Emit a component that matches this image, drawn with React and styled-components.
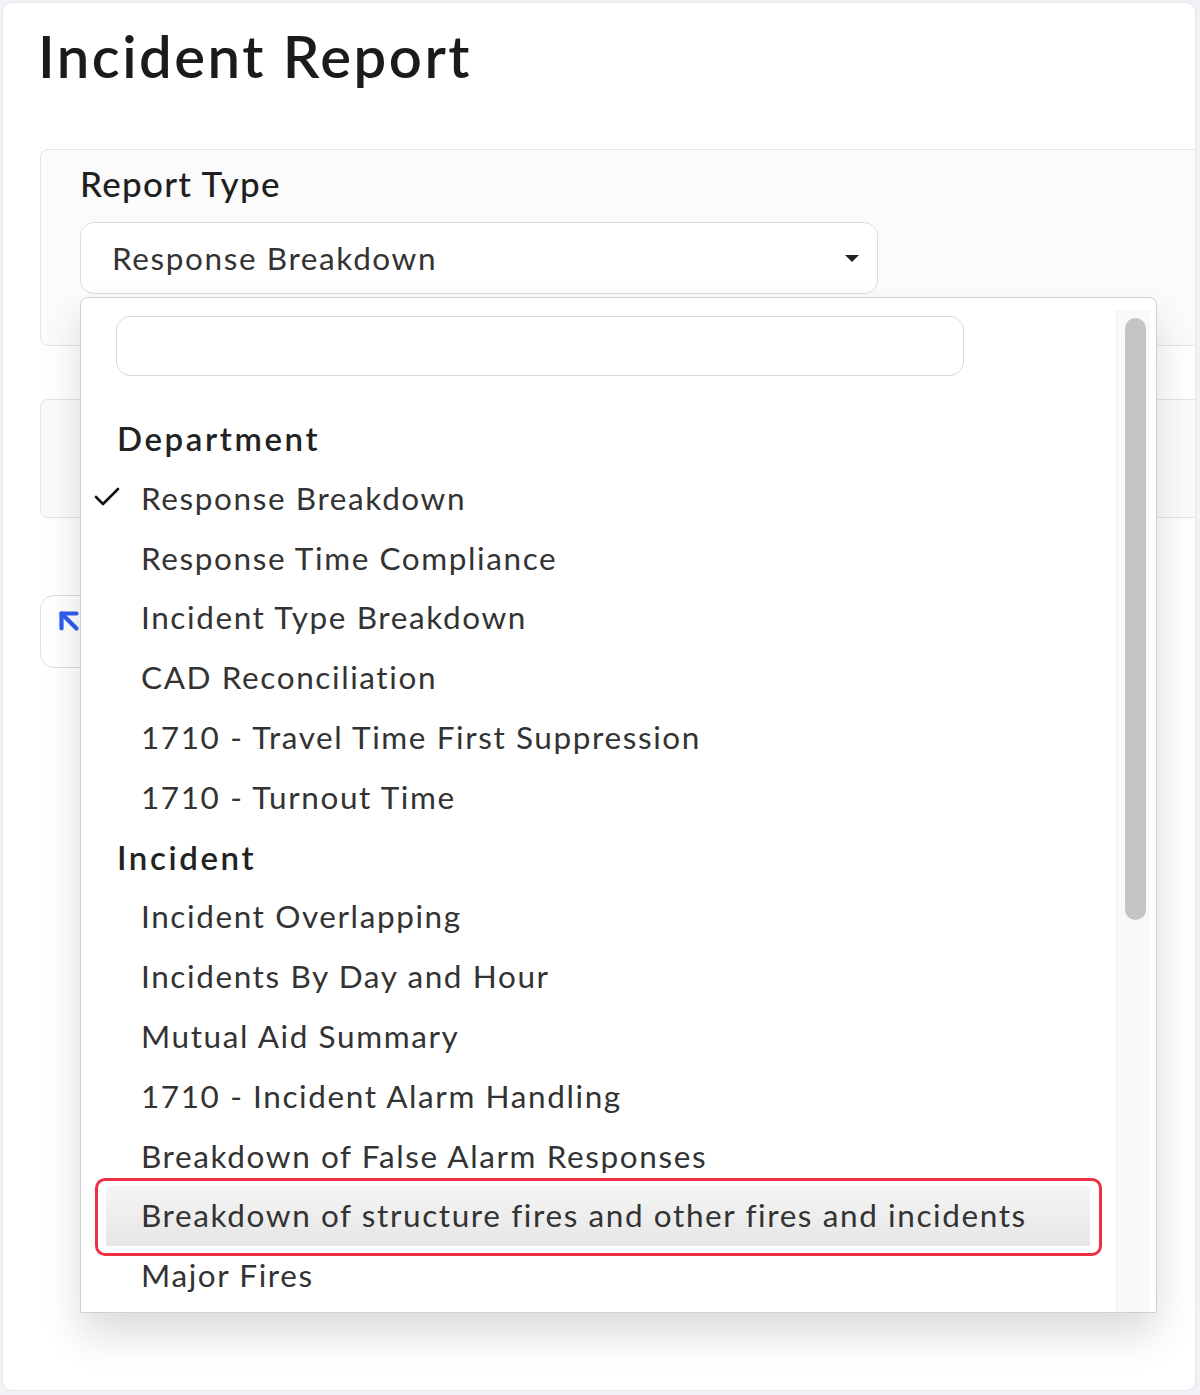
import React from 'react'
import styled, { createGlobalStyle } from 'styled-components'
import { ArrowUpLeft } from 'lucide-react'

const GlobalStyle = createGlobalStyle`
  html, body {
    margin: 0;
    padding: 0;
    background: #f1f1f6;
    font-family: Lato, "Open Sans", "Liberation Sans", sans-serif;
    color: #222;
  }
`

const groups = [
  {
    title: 'Department',
    items: [
      'Response Breakdown',
      'Response Time Compliance',
      'Incident Type Breakdown',
      'CAD Reconciliation',
      '1710 - Travel Time First Suppression',
      '1710 - Turnout Time',
    ],
  },
  {
    title: 'Incident',
    items: [
      'Incident Overlapping',
      'Incidents By Day and Hour',
      'Mutual Aid Summary',
      '1710 - Incident Alarm Handling',
      'Breakdown of False Alarm Responses',
      'Breakdown of structure fires and other fires and incidents',
      'Major Fires',
    ],
  },
]

const selected = 'Response Breakdown'
const hovered = 'Breakdown of structure fires and other fires and incidents'

const IncidentReport = () => {
  return (
    <>
      <GlobalStyle />
      <Frame>
        <Title>Incident Report</Title>
        <Cards>
          <Card $height={197}>
            <Label>Report Type</Label>
            <SelectWrap>
              <SelectBox>
                <span>{selected}</span>
                <Caret />
              </SelectBox>
              <Dropdown>
                <List>
                  <Search />
                  {groups.map((g) => (
                    <div key={g.title}>
                      <GroupTitle>{g.title}</GroupTitle>
                      {g.items.map((item) => (
                        <Option key={item} $active={item === hovered}>
                          {item === selected && (
                            <Check width="28" height="22" viewBox="0 0 28 22">
                              <path d="M3 11 L10 18 L25 3" />
                            </Check>
                          )}
                          {item}
                        </Option>
                      ))}
                    </div>
                  ))}
                </List>
                <Track>
                  <Thumb />
                </Track>
              </Dropdown>
            </SelectWrap>
          </Card>
          <Card $height={119} />
          <IconButton>
            <ArrowUpLeft size={36} strokeWidth={2.8} color="#2f5cf4" />
          </IconButton>
        </Cards>
      </Frame>
    </>
  )
}

export default IncidentReport

const Frame = styled.div`
  margin: 2px;
  width: 1194px;
  height: 1389px;
  background: #fff;
  border: 1px solid #e6e6ec;
  border-radius: 10px;
  overflow: hidden;
  box-sizing: border-box;
`

const Title = styled.h1`
  margin: 0;
  padding: 18px 0 0 35px;
  font-size: 58px;
  font-weight: 600;
  line-height: 70px;
  color: #1b1b1b;
  letter-spacing: 2.5px;
`

const Cards = styled.div`
  display: flex;
  flex-direction: column;
  align-items: flex-start;
  gap: 53px;
  padding: 58px 0 0 37px;
`

const Card = styled.div`
  width: 1200px;
  height: ${(p) => p.$height}px;
  box-sizing: border-box;
  padding: 11px 39px 0;
  background: #fbfbfb;
  border: 1px solid #e4e4e4;
  border-radius: 8px;
`

const Label = styled.div`
  font-size: 35px;
  font-weight: 500;
  line-height: 44px;
  letter-spacing: 1.3px;
  color: #1f1f1f;
  margin-bottom: 17px;
`

const SelectWrap = styled.div`
  position: relative;
  width: 798px;
`

const SelectBox = styled.div`
  height: 72px;
  box-sizing: border-box;
  display: flex;
  align-items: center;
  justify-content: space-between;
  padding: 0 18px 0 31px;
  background: #fff;
  border: 1.5px solid #dcdcdc;
  border-radius: 14px;
  font-size: 31.5px;
  letter-spacing: 1.6px;
  color: #333;
`

const Caret = styled.span`
  width: 0;
  height: 0;
  border-left: 7px solid transparent;
  border-right: 7px solid transparent;
  border-top: 7px solid #222;
`

const Dropdown = styled.div`
  position: absolute;
  top: 75px;
  left: 0;
  width: 1077px;
  height: 1016px;
  box-sizing: border-box;
  display: flex;
  background: #fff;
  border: 1.5px solid #cfcfcf;
  border-radius: 8px 8px 2px 2px;
  box-shadow: 0 22px 40px rgba(0, 0, 0, 0.14);
  z-index: 5;
`

const List = styled.div`
  flex: 1;
  padding: 18px 26px 0 25px;
  overflow: hidden;
`

const Search = styled.div`
  width: 848px;
  height: 60px;
  margin-left: 10px;
  margin-bottom: 33px;
  box-sizing: border-box;
  border: 1.5px solid #d8d8d8;
  border-radius: 14px;
  background: #fff;
`

const GroupTitle = styled.div`
  height: 59.8px;
  line-height: 59.8px;
  padding-left: 11px;
  font-size: 33px;
  font-weight: 600;
  letter-spacing: 2.6px;
  color: #222;
`

const Option = styled.div`
  position: relative;
  height: 59.8px;
  line-height: 59.8px;
  padding-left: 35px;
  font-size: 31.5px;
  letter-spacing: 1.6px;
  color: #333;
  white-space: nowrap;
  background: ${(p) =>
    p.$active ? 'linear-gradient(#f5f5f5, #e6e6e6)' : 'transparent'};
  &::after {
    content: '';
    display: ${(p) => (p.$active ? 'block' : 'none')};
    position: absolute;
    top: -8px;
    bottom: -10px;
    left: -11px;
    right: -12px;
    border: 3px solid #ee2f43;
    border-radius: 10px;
  }
`

const Check = styled.svg`
  position: absolute;
  left: -13px;
  top: 17px;
  fill: none;
  stroke: #111;
  stroke-width: 2.6;
  stroke-linecap: round;
  stroke-linejoin: round;
`

const Track = styled.div`
  width: 34px;
  margin: 12px 6px 0 0;
  background: #f9f9f9;
  border-left: 1px solid #ececec;
  padding-top: 8px;
  box-sizing: border-box;
  display: flex;
  justify-content: center;
`

const Thumb = styled.div`
  width: 21px;
  height: 602px;
  margin-left: 4px;
  background: #c4c4c4;
  border-radius: 11px;
`

const IconButton = styled.div`
  width: 120px;
  height: 73px;
  margin-top: 24px;
  box-sizing: border-box;
  display: flex;
  align-items: flex-start;
  padding: 7px 0 0 10px;
  border: 1.5px solid #dedede;
  border-radius: 14px;
  background: #fff;
`
